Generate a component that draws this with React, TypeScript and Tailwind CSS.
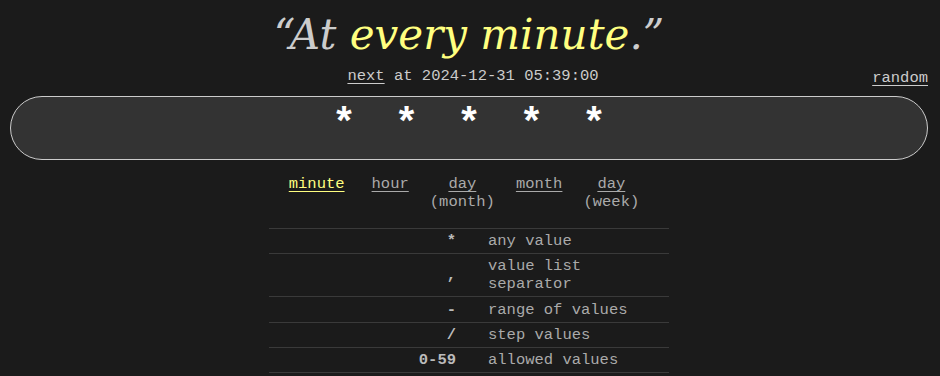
import React from "react";

const rows = [
  { sym: "*", desc: "any value" },
  { sym: ",", desc: "value list separator" },
  { sym: "-", desc: "range of values" },
  { sym: "/", desc: "step values" },
  { sym: "0-59", desc: "allowed values" },
];

const parts = [
  { label: "minute", sub: null, active: true },
  { label: "hour", sub: null, active: false },
  { label: "day", sub: "(month)", active: false },
  { label: "month", sub: null, active: false },
  { label: "day", sub: "(week)", active: false },
];

export default function App() {
  return (
    <div className="min-h-[376px] bg-[#1b1b1b] text-[#aaa] font-['Liberation_Mono',monospace] pl-[10px] pr-[12px] pt-2 overflow-hidden">
      <h1 className="text-center font-['DejaVu_Serif',serif] italic text-[42px] leading-[54px] text-[#ccc]">
        “At <span className="text-[#ffff80]">every minute</span>.”
      </h1>

      <div className="grid grid-cols-[1fr_auto_1fr] mt-[5px] text-[15.5px] leading-[18px]">
        <div />
        <div className="text-[#ccc] pl-2">
          <span className="underline underline-offset-[3px]">next</span> at 2024-12-31 05:39:00
        </div>
        <div className="justify-self-end pt-[2px]">
          <span className="underline underline-offset-[3px] text-[#ccc]">random</span>
        </div>
      </div>

      <div className="mt-[9px] h-[64px] rounded-full border border-[#ccc] bg-[#333] flex justify-center items-start gap-[38.5px] pt-[9px] text-white text-[40px] leading-[40px] font-bold">
        {[0, 1, 2, 3, 4].map((i) => (
          <span key={i} className="w-[24px] text-center">
            *
          </span>
        ))}
      </div>

      <div className="flex justify-center pr-[10px] mt-[15px] text-[15.5px] leading-[18px]">
        {parts.map((p, i) => (
          <div
            key={i}
            className={`flex flex-col items-center ${i === 0 ? "" : i === 1 ? "ml-[27px]" : "ml-[21px]"}`}
          >
            <span
              className={`underline underline-offset-[3px] ${p.active ? "text-[#ffff80]" : "text-[#aaa]"}`}
            >
              {p.label}
            </span>
            {p.sub && <span className="text-[#aaa]">{p.sub}</span>}
          </div>
        ))}
      </div>

      <div className="mx-auto mt-[17px] w-[400px] border-t border-[#3a3a3a] text-[15.5px] leading-[18px]">
        {rows.map((r, i) => (
          <div
            key={r.sym}
            className={`grid grid-cols-[203px_197px] items-center border-b border-[#3a3a3a] ${i === 2 ? "pt-[3.5px] pb-[3.5px]" : "py-[3px]"}`}
          >
            <div className="text-right pr-[16px] font-bold text-[#bbb]">{r.sym}</div>
            <div className="pl-[16px] text-[#aaa]">{r.desc}</div>
          </div>
        ))}
      </div>
    </div>
  );
}
